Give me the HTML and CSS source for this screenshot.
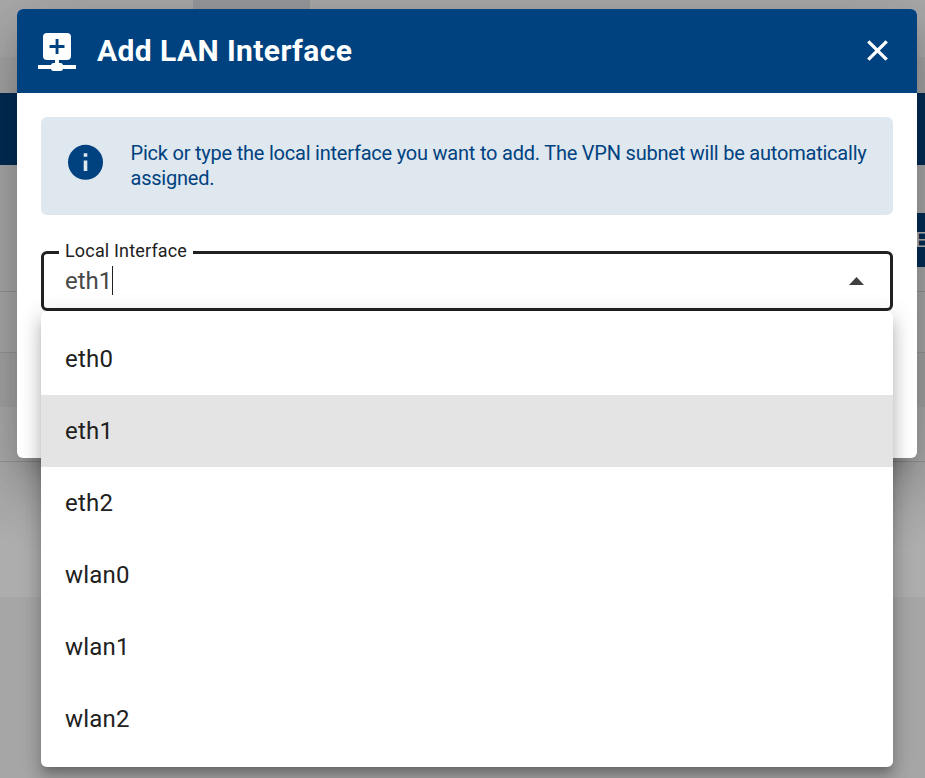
FILE: index.html
```html
<!DOCTYPE html>
<html lang="en">
<head>
<meta charset="utf-8">
<title>Add LAN Interface</title>
<link rel="stylesheet" href="styles.css">
</head>
<body>
<div class="page">
  <div class="toolbar"><div class="tab"></div></div>
  <div class="subbar"></div>
  <div class="banner"></div>
  <div class="actions"><div class="page-button">E</div></div>
  <div class="row row-first"></div>
  <div class="row row-second"></div>
  <div class="row row-last"></div>
  <div class="panel"></div>
  <div class="footer"></div>
</div>
<div class="dialog">
  <header class="dialog-header">
    <svg class="lan-icon" viewBox="0 0 38 38" width="38" height="38" fill="#fff">
      <path fill-rule="evenodd" d="M9 0h20a4 4 0 0 1 4 4v19a4 4 0 0 1-4 4h-8v3h1.500q2.200 0 2.500 2h13v4H25q-.3 2-2.500 2h-7q-2.200 0-2.500-2H0v-4h13q.3-2 2.500-2H17v-3H9a4 4 0 0 1-4-4V4a4 4 0 0 1 4-4zM17.600 6v6h-6.100v2.900h6.100v6h2.900v-6h6v-2.900h-6V6z"/>
    </svg>
    <h1>Add LAN Interface</h1>
    <svg class="close-icon" viewBox="0 0 22 22" width="22" height="22" fill="none" stroke="#fff" stroke-width="3.300"><path d="M1.300 1.300l18.400 18.400M19.700 1.300l-18.400 18.400"/></svg>
  </header>
  <div class="dialog-body">
    <div class="notice">
      <svg class="info-icon" viewBox="0 0 36 36" width="36" height="36"><circle cx="18.500" cy="18.300" r="17.500" fill="#00427f"/><path fill="#dfe7ef" d="M16.700 9.300h3.600v3.500h-3.600zM16.700 16.500h3.600v10.500h-3.600z"/></svg>
      <p>Pick or type the local interface you want to add. The VPN subnet will be automatically assigned.</p>
    </div>
    <div class="field">
      <span class="field-label">Local Interface</span>
      <span class="field-value">eth1</span><span class="caret"></span>
      <svg class="arrow" viewBox="0 0 16 8" width="16" height="8"><path d="M0 8L7.500 0 15 8z" fill="#404040"/></svg>
      <ul class="menu">
        <li>eth0</li>
        <li class="selected">eth1</li>
        <li>eth2</li>
        <li>wlan0</li>
        <li>wlan1</li>
        <li>wlan2</li>
      </ul>
    </div>
  </div>
</div>
</body>
</html>
```
FILE: styles.css
```css
* { box-sizing: border-box; }
body { margin: 0; width: 925px; height: 778px; overflow: hidden; font-family: Roboto, sans-serif; color: #212121; background: #a6a6a6; }
.page { display: flex; flex-direction: column; height: 778px; }
.toolbar { height: 57px; background: #aaa; }
.tab { width: 117px; height: 57px; margin-left: 193px; background: #989a9d; }
.subbar { height: 36px; background: #a6a6a6; }
.banner { height: 72px; background: #002d56; }
.actions { height: 127px; padding-top: 48px; background: #aaa; border-bottom: 1px solid #979797; }
.page-button { width: 48px; height: 54px; margin-left: 877px; padding-left: 38px; background: #002d56; color: #b8b8b8; font-size: 21px; line-height: 54px; font-weight: 400; letter-spacing: -2px; }
.row { border-bottom: 1px solid #979797; background: #aaa; }
.row-first { height: 61px; }
.row-second { height: 54px; border: 0; background: #a6a6a6; }
.row-last { height: 55px; background: #adadad; }
.panel { height: 135px; background: #adadad; }
.footer { flex: 1; background: #a6a6a6; }
.dialog { position: absolute; left: 17px; top: 9px; width: 900px; height: 449px; border-radius: 6px; background: #fff; box-shadow: 0 16.5px 22.5px -10.5px rgba(0,0,0,.2), 0 36px 57px 4.5px rgba(0,0,0,.14), 0 13.5px 69px 12px rgba(0,0,0,.12); }
.dialog-header { display: flex; align-items: center; height: 84px; padding: 0 28px 0 21px; border-radius: 6px 6px 0 0; background: #00427f; color: #fff; }
.lan-icon { margin-top: 2px; }
h1 { flex: 1; margin: 0 0 0 21px; font-size: 30px; line-height: 42px; font-weight: 700; letter-spacing: .4px; }
.dialog-body { padding: 24px; }
.notice { display: flex; align-items: flex-start; height: 98px; padding: 24px 22px 0 26px; border-radius: 6px; background: #dfe7ef; color: #00427f; }
.info-icon { flex: none; margin-top: 3px; }
.notice p { margin: 0 0 0 27.5px; font-size: 20px; line-height: 25px; letter-spacing: -.218px; }
.field { position: relative; display: flex; align-items: center; height: 60px; margin-top: 36px; padding: 0 25px 0 21px; border: 3px solid #212121; border-radius: 6px; }
.field-label { position: absolute; left: 15px; top: -15px; height: 24px; padding: 0 6px; background: #fff; font-size: 18px; line-height: 24px; letter-spacing: .17px; }
.field-value { font-size: 24px; line-height: 30px; color: #484848; }
.caret { width: 1px; height: 29px; margin-top: -1px; background: #212121; }
.arrow { margin-left: auto; }
.menu { position: absolute; left: -3px; top: 57px; width: 852px; height: 456px; margin: 0; padding: 12px 0; list-style: none; border-radius: 6px; background: #fff; box-shadow: 0 7.5px 7.5px -4.5px rgba(0,0,0,.2), 0 12px 15px 1.5px rgba(0,0,0,.14), 0 4.5px 21px 3px rgba(0,0,0,.12); }
.menu li { height: 72px; padding-left: 24px; font-size: 24px; line-height: 72px; letter-spacing: .22px; }
.menu .selected { background: #e4e4e4; }
```
